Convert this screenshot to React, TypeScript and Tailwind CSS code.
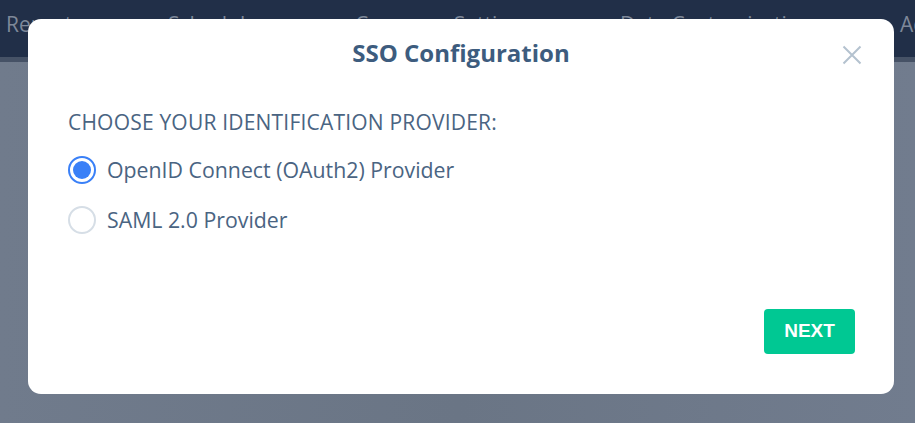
import React, { useState } from "react";

const OS = { fontFamily: '"Open Sans", "Noto Sans", sans-serif' };

function Radio({ checked, label, onClick }: { checked: boolean; label: string; onClick: () => void }) {
  return (
    <button type="button" onClick={onClick} className="flex items-center gap-[11px] h-[28px] text-left">
      <span
        className={
          "w-[28px] h-[28px] rounded-full flex items-center justify-center shrink-0 " +
          (checked ? "border-2 border-[#3a80f7]" : "border-2 border-[#d6dee6]")
        }
      >
        {checked && <span className="w-[18px] h-[18px] rounded-full bg-[#3a80f7]" />}
      </span>
      <span className="text-[21.3px] leading-[28px] text-[#4a6482] whitespace-nowrap" style={OS}>
        {label}
      </span>
    </button>
  );
}

export default function App() {
  const [sel, setSel] = useState(0);
  return (
    <div className="relative w-[915px] h-[423px] overflow-hidden bg-[#6c7788]" style={OS}>
      <div className="h-[57px] bg-[#212f48] flex items-start pt-[10px] pl-[6px] whitespace-nowrap text-[21px] leading-[28px] text-[#7e8899]">
        <span className="w-[162px] shrink-0">Reports</span>
        <span className="w-[187px] shrink-0">Schedules</span>
        <span className="w-[265px] shrink-0">Company Settings</span>
        <span className="w-[280px] shrink-0">Data Customization</span>
        <span className="shrink-0">Admin</span>
      </div>
      <div className="h-[5px] bg-[#465266]" />
      <div className="h-[361px] bg-gradient-to-r from-[#707b8c] via-[#6a7585] to-[#717c8e]" />

      <div className="absolute left-[28px] top-[19px] w-[866px] h-[375px] bg-white rounded-[13px] flex flex-col">
        <div className="relative pt-[18px] flex justify-center">
          <h2 className="text-[24px] font-bold text-[#3d5c7e] leading-[32px]">SSO Configuration</h2>
          <button type="button" className="absolute right-[32px] top-[26px] w-[20px] h-[20px] flex items-center justify-center">
            <svg width="20" height="20" viewBox="0 0 20 20" fill="none" stroke="#b4c2cf" strokeWidth="2">
              <path d="M1.5 1.5 L18.5 18.5 M18.5 1.5 L1.5 18.5" />
            </svg>
          </button>
        </div>
        <div className="px-[40px] pt-[39px] flex flex-col">
          <div className="text-[21px] leading-[28px] tracking-[0.2px] text-[#4a6482] whitespace-nowrap">CHOOSE YOUR IDENTIFICATION PROVIDER:</div>
          <div className="mt-[20px] flex flex-col gap-[22px]">
            <Radio checked={sel === 0} label="OpenID Connect (OAuth2) Provider" onClick={() => setSel(0)} />
            <Radio checked={sel === 1} label="SAML 2.0 Provider" onClick={() => setSel(1)} />
          </div>
        </div>
        <div className="mt-auto flex justify-end pr-[39px] pb-[40px]">
          <button
            type="button"
            className="w-[91px] h-[45px] rounded-[4px] bg-[#00c893] text-white text-[19px] font-bold"
            style={{ fontFamily: '"Liberation Sans", Arial, sans-serif' }}
          >
            NEXT
          </button>
        </div>
      </div>
    </div>
  );
}
